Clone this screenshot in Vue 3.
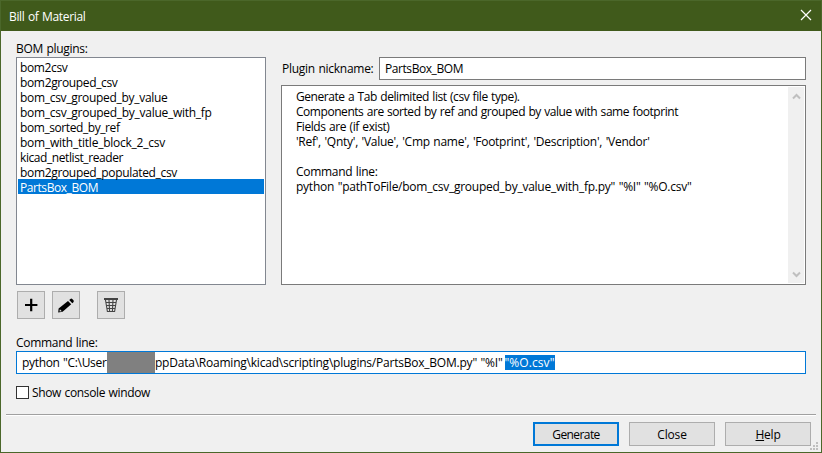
<script setup>
import { ref } from 'vue'

const plugins = [
  { name: 'bom2csv', width: 47.5 },
  { name: 'bom2grouped_csv', width: 97.5 },
  { name: 'bom_csv_grouped_by_value', width: 147.5 },
  { name: 'bom_csv_grouped_by_value_with_fp', width: 191.5 },
  { name: 'bom_sorted_by_ref', width: 99.5 },
  { name: 'bom_with_title_block_2_csv', width: 145 },
  { name: 'kicad_netlist_reader', width: 103 },
  { name: 'bom2grouped_populated_csv', width: 157 },
  { name: 'PartsBox_BOM', width: 78 },
]
const selected = ref(8)

const description = [
  { text: 'Generate a Tab delimited list (csv file type).', width: 223.5 },
  { text: 'Components are sorted by ref and grouped by value with same footprint', width: 382 },
  { text: 'Fields are (if exist)', width: 93.5 },
  { text: "'Ref', 'Qnty', 'Value', 'Cmp name', 'Footprint', 'Description', 'Vendor'", width: 353.5 },
  { text: '', width: 0 },
  { text: 'Command line:', width: 81.5 },
  { text: 'python "pathToFile/bom_csv_grouped_by_value_with_fp.py" "%I" "%O.csv"', width: 395.5 },
]

// Tracks the text so that it fills the given width.
const vFit = {
  mounted(el, { value }) {
    const count = el.textContent.length
    if (!value || !count) return
    const natural = el.getBoundingClientRect().width
    el.style.letterSpacing = `${(value - natural) / count}px`
  },
}
</script>

<template>
  <div class="window">
    <header class="titlebar">
      <span v-fit="76.5">Bill of Material</span>
      <svg class="close" width="12" height="12" viewBox="0 0 12 12">
        <path d="M1 1L11 11M11 1L1 11" />
      </svg>
    </header>

    <main class="body">
      <section class="top">
        <div class="left">
          <div class="label"><span v-fit="71.5">BOM plugins:</span></div>
          <ul class="list">
            <li
              v-for="(p, i) in plugins"
              :key="p.name"
              :class="{ selected: i === selected }"
              @click="selected = i"
            ><span v-fit="p.width">{{ p.name }}</span></li>
          </ul>
        </div>
        <div class="right">
          <div class="nickname">
            <label><span v-fit="91.5">Plugin nickname:</span></label>
            <div class="field"><span v-fit="78">PartsBox_BOM</span></div>
          </div>
          <div class="description">
            <div class="lines">
              <p v-for="(l, i) in description" :key="i"><span v-fit="l.width">{{ l.text }}</span></p>
            </div>
            <div class="scrollbar">
              <svg width="9" height="7" viewBox="0 0 9 7"><path d="M1 5.5L4.5 2L8 5.5" /></svg>
              <svg width="9" height="7" viewBox="0 0 9 7"><path d="M1 1.5L4.5 5L8 1.5" /></svg>
            </div>
          </div>
        </div>
      </section>

      <div class="tools">
        <button class="tool">
          <svg width="26" height="26" viewBox="0 0 26 26">
            <path d="M7 13H19.4M13.2 6.8V19.2" stroke="#000" stroke-width="2.2" />
          </svg>
        </button>
        <button class="tool">
          <svg width="26" height="26" viewBox="0 0 26 26">
            <path d="M5.2 20.5L5.6 16.4L15 9L18.2 12.2L9.6 19.8Z" />
            <path d="M16.2 8L17.4 7Q18.3 6.2 19.2 7L20.5 8.3Q21.2 9.4 20.4 10.2L19.3 11.2Z" />
            <path d="M6.9 17.3L8.8 19.2L6.5 19.6Z" fill="#e1e1e1" />
          </svg>
        </button>
        <button class="tool trash">
          <svg width="26" height="26" viewBox="0 0 26 26">
            <path d="M6 7H20" stroke="#333" stroke-width="1.8" />
            <path
              d="M7.5 8L9.4 19.5H16.6L18.5 8M11 8L11.6 19.5M15 8L14.4 19.5M8 10.5H18M8.5 13.5H17.5M9 16.5H17"
              fill="none" stroke="#444" stroke-width="1.1"
            />
          </svg>
        </button>
      </div>

      <div class="label command-label"><span v-fit="81.5">Command line:</span></div>
      <div class="field command">
        <span v-fit="84.5">python "C:\User</span>
        <span class="redacted"></span>
        <span v-fit="347.5">ppData\Roaming\kicad\scripting\plugins/PartsBox_BOM.py" "%I"</span>
        <span class="highlight"><span v-fit="50">"%O.csv"</span></span>
      </div>

      <label class="check"><i class="box"></i><span v-fit="118">Show console window</span></label>
    </main>

    <footer class="footer">
      <button class="btn primary"><span v-fit="47.5">Generate</span></button>
      <button class="btn"><span v-fit="29.5">Close</span></button>
      <button class="btn"><span v-fit="25"><u>H</u>elp</span></button>
      <svg class="grip" width="8" height="8" viewBox="0 0 8 8">
        <path d="M6 0h2v2h-2zM3 3h2v2h-2zM6 3h2v2h-2zM0 6h2v2h-2zM3 6h2v2h-2zM6 6h2v2h-2z" />
      </svg>
    </footer>
  </div>
</template>

<style>
body {
  margin: 0;
}
</style>

<style scoped>
* {
  box-sizing: border-box;
}
.window {
  width: 822px;
  height: 453px;
  position: relative;
  display: flex;
  flex-direction: column;
  background: #f0f0f0;
  border: 1px solid #4b672a;
  font: 12px/15px "Open Sans", "Noto Sans", sans-serif;
  word-spacing: 0.7px;
  color: #000;
  white-space: pre;
}
.titlebar {
  height: 30px;
  flex: none;
  background: #405a1b;
  color: #fff;
  display: flex;
  justify-content: space-between;
  align-items: center;
  padding: 0 9px 0 8px;
}
.close {
  margin-bottom: 2px;
}
.close path {
  stroke: #fff;
  stroke-width: 1.2;
}
.body {
  flex: none;
  height: 384px;
  margin: 0 5px;
  padding: 10px 10px 0 10px;
  border-bottom: 1px solid #a0a0a0;
  box-shadow: 0 1px #fff;
}
.top {
  display: flex;
  gap: 15px;
  height: 244px;
}
.left {
  width: 250px;
  flex: none;
}
.label {
  height: 16px;
}
.list {
  height: 228px;
  margin: 0;
  padding: 1px;
  list-style: none;
  background: #fff;
  border: 1px solid #828790;
}
.list li {
  height: 15px;
  line-height: 17px;
  padding-left: 2px;
}
.list li.selected {
  background: #0078d7;
  color: #fff;
}
.right {
  width: 525px;
  flex: none;
  padding-top: 16px;
}
.nickname {
  display: flex;
  align-items: center;
  justify-content: space-between;
}
.field {
  height: 23px;
  background: #fff;
  border: 1px solid #7a7a7a;
  display: flex;
  align-items: center;
}
.nickname .field {
  width: 427px;
  padding: 0 0 1px 5px;
}
.nickname label {
  padding: 0 0 1px 1px;
}
.description {
  margin-top: 5px;
  height: 200px;
  padding: 1px;
  background: #fff;
  border: 1px solid #7a7a7a;
  display: flex;
  justify-content: space-between;
}
.lines {
  padding: 2px 0 0 13px;
}
.lines p {
  margin: 0;
  height: 15px;
}
.scrollbar {
  width: 16px;
  background: #f0f0f0;
  display: flex;
  flex-direction: column;
  align-items: center;
  justify-content: space-between;
  padding: 6px 0 5px;
}
.scrollbar path {
  fill: none;
  stroke: #bfbfbf;
  stroke-width: 2;
}
.tools {
  display: flex;
  gap: 7px;
  padding: 6px 0 0 1px;
}
.tool {
  width: 28px;
  height: 28px;
  padding: 0;
  border: 1px solid #adadad;
  background: #e1e1e1;
}
.tool svg {
  display: block;
}
.trash {
  margin-left: 10px;
}
.command-label {
  margin-top: 16px;
}
.field.command {
  width: 790px;
  border: 1px solid #0078d7;
  padding: 0 0 1px 5px;
}
.redacted {
  width: 48px;
  height: 21px;
  margin: 0 0 -1px 0.5px;
  background: #808080;
}
.highlight {
  height: 15px;
  margin-left: 2px;
  background: #0078d7;
  color: #fff;
}
.check {
  display: flex;
  align-items: center;
  gap: 3px;
  margin-top: 11px;
}
.box {
  width: 13px;
  height: 13px;
  background: #fff;
  border: 1px solid #333;
}
.footer {
  display: flex;
  justify-content: flex-end;
  gap: 10px;
  padding: 7px 10px 0;
}
.btn {
  width: 86px;
  height: 24px;
  padding: 0;
  font: inherit;
  color: #000;
  border: 1px solid #adadad;
  background: #e1e1e1;
}
.btn.primary {
  border: 2px solid #0078d7;
}
.btn u {
  text-underline-offset: 1px;
}
.grip {
  position: absolute;
  right: 3px;
  bottom: 2px;
  fill: #bfbfbf;
}
</style>
